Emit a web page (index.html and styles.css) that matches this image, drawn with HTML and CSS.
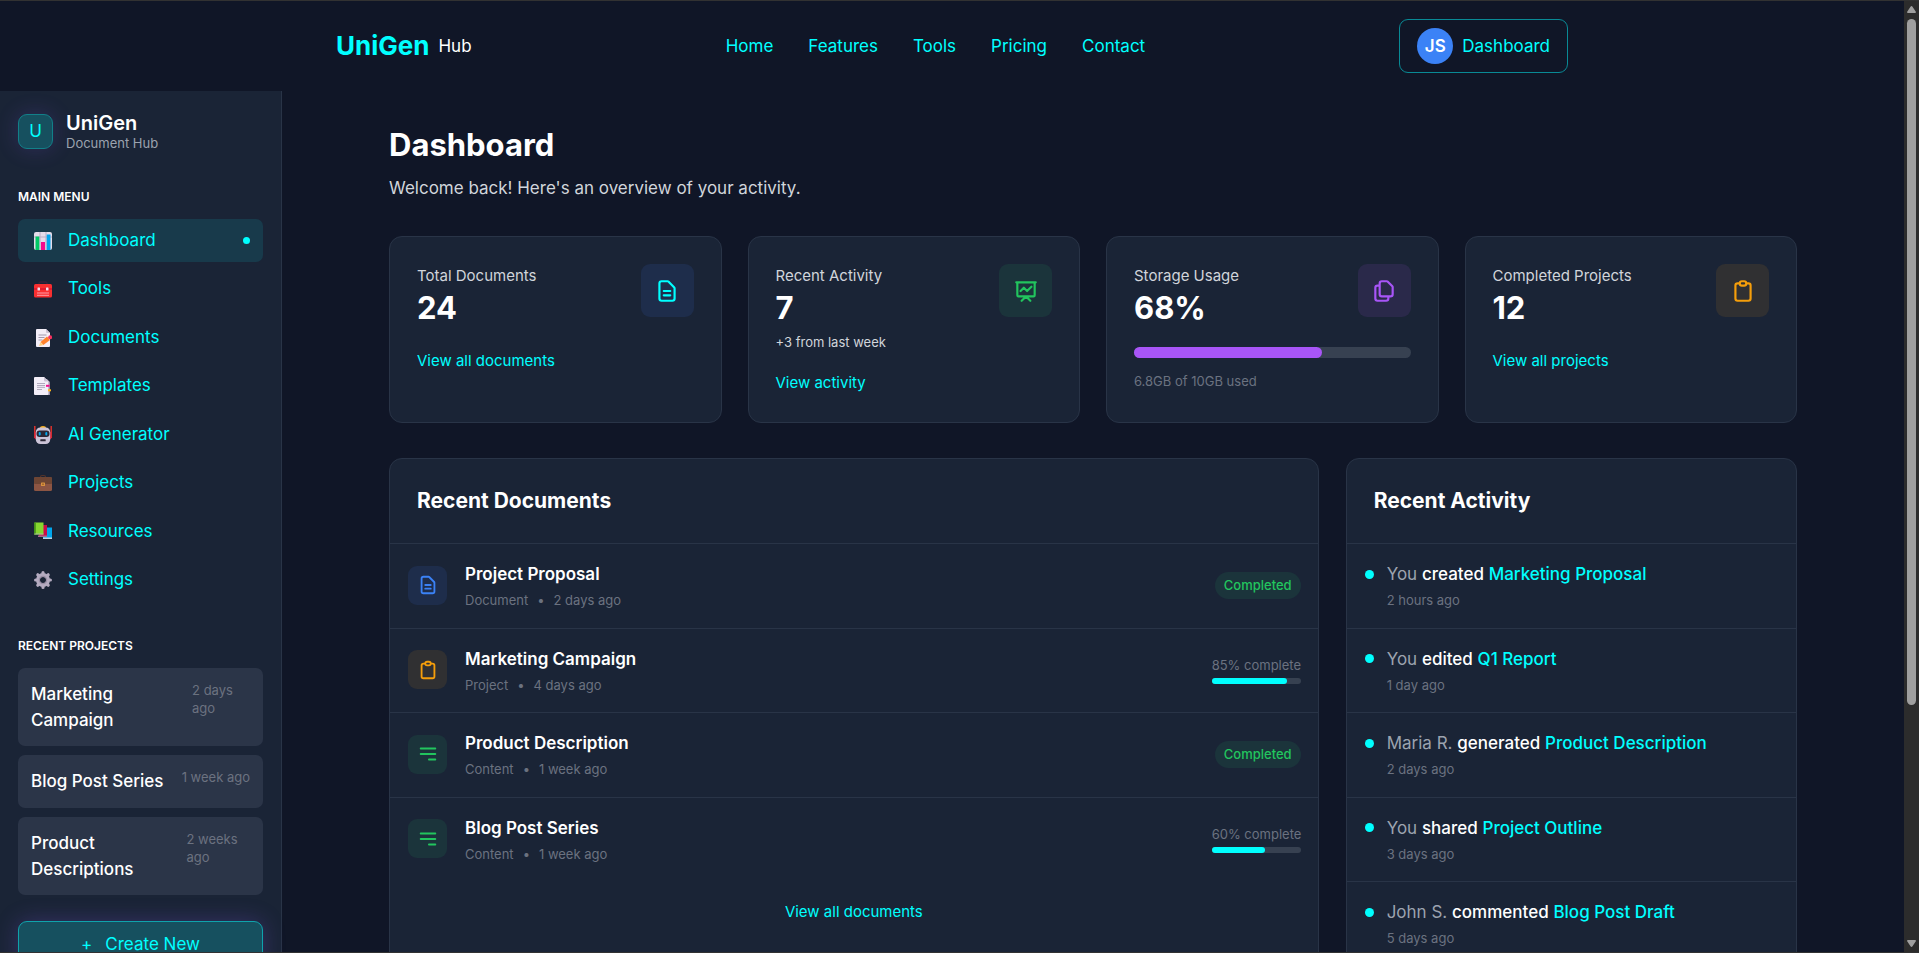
FILE: index.html
```html
<!DOCTYPE html>
<html lang="en">
<head>
<meta charset="utf-8">
<title>UniGen Hub – Dashboard</title>
<meta name="viewport" content="width=device-width, initial-scale=1">
<link rel="stylesheet" href="styles.css">
</head>
<body>
<svg class="sprite" aria-hidden="true">
  <symbol id="i-doc" viewBox="0 0 24 24"><path d="M9 12h6m-6 4h6m2 5H7a2 2 0 01-2-2V5a2 2 0 012-2h5.586a1 1 0 01.707.293l5.414 5.414a1 1 0 01.293.707V19a2 2 0 01-2 2z"/></symbol>
  <symbol id="i-chart" viewBox="0 0 24 24"><path d="M7 12l3-3 3 3 4-4M8 21l4-4 4 4M3 4h18M4 4h16v12a1 1 0 01-1 1H5a1 1 0 01-1-1V4z"/></symbol>
  <symbol id="i-copy" viewBox="0 0 24 24"><path d="M8 7v8a2 2 0 002 2h6M8 7V5a2 2 0 012-2h4.586a1 1 0 01.707.293l4.414 4.414a1 1 0 01.293.707V15a2 2 0 01-2 2h-2M8 7H6a2 2 0 00-2 2v10a2 2 0 002 2h8a2 2 0 002-2v-2"/></symbol>
  <symbol id="i-clip" viewBox="0 0 24 24"><path d="M9 5H7a2 2 0 00-2 2v12a2 2 0 002 2h10a2 2 0 002-2V7a2 2 0 00-2-2h-2M9 5a2 2 0 002 2h2a2 2 0 002-2M9 5a2 2 0 012-2h2a2 2 0 012 2"/></symbol>
  <symbol id="i-lines" viewBox="0 0 24 24"><path d="M4 6h16M4 12h16m-7 6h7"/></symbol>
</svg>
<div class="window">
  <div class="view">
    <header class="topbar">
      <div class="topbar-inner">
        <a class="logo" href="#"><span class="logo-name">UniGen</span><span class="logo-sub">Hub</span></a>
        <nav class="topnav" aria-label="Site">
          <a href="#">Home</a><a href="#">Features</a><a href="#">Tools</a><a href="#">Pricing</a><a href="#">Contact</a>
        </nav>
        <a class="account" href="#"><span class="avatar">JS</span><span>Dashboard</span></a>
      </div>
    </header>
    <div class="body">
      <aside class="sidebar">
        <div class="brand">
          <span class="brand-mark">U</span>
          <div><p class="brand-name">UniGen</p><p class="brand-sub">Document Hub</p></div>
        </div>
        <h2 class="side-title">MAIN MENU</h2>
        <nav class="menu" aria-label="Main menu">
          <a class="menu-item active" href="#">
            <svg class="emoji" viewBox="0 0 18 18"><rect width="18" height="18" rx="2" fill="#e4dcea"/><path d="M6 0v18M12 0v18M0 5h18" stroke="#b9aec6" stroke-width="1"/><rect x="1.5" y="4.500" width="3.800" height="13.500" fill="#00c965"/><rect x="7" y="10" width="4" height="8" fill="#f70a8d"/><rect x="12.700" y="2.500" width="3.800" height="15.500" fill="#00a6ed"/></svg>
            <span>Dashboard</span></a>
          <a class="menu-item" href="#">
            <svg class="emoji" viewBox="0 0 18 18"><path d="M5 4V3q0-1 1-1h6q1 0 1 1v1" fill="none" stroke="#46203c"/><rect y="4" width="18" height="13.500" rx="1.500" fill="#f92f30"/><path d="M0 9h18" stroke="#ca0b2e"/><rect x="3.500" y="7.500" width="2.500" height="3" rx=".6" fill="#f6ddea"/><rect x="12" y="7.500" width="2.500" height="3" rx=".6" fill="#f6ddea"/><path d="M3 13h12M3 15.300h12" stroke="#ff9fa8"/></svg>
            <span>Tools</span></a>
          <a class="menu-item" href="#">
            <svg class="emoji" viewBox="0 0 18 18"><path d="M3 0h9l4 4v13q0 1-1 1H3q-1 0-1-1V1q0-1 1-1z" fill="#f3eef8"/><path d="M12 0v3q0 1 1 1h3z" fill="#cdc4d6"/><path d="M4.500 6h8M4.500 8.500h6M4.500 11h4" stroke="#998ea4" stroke-width=".9"/><path d="M6.500 13l6.500-5.500 3 3.500-6.600 5z" fill="#ff822d"/><path d="M6.500 13L5 16.900l4.400-.9z" fill="#ffce7c"/><circle cx="16.200" cy="8.300" r="2" fill="#f8315f"/></svg>
            <span>Documents</span></a>
          <a class="menu-item" href="#">
            <svg class="emoji" viewBox="0 0 18 18"><path d="M4 2h9l3 3v13H4z" fill="#9b8fa8"/><path d="M1 0h9l4.500 4.500V17q0 1-1 1H1q-1 0-1-1V1q0-1 1-1z" fill="#f3eef8"/><path d="M10 0v3.500q0 1 1 1h3.500z" fill="#cdc4d6"/><path d="M3 6.500h8M3 8.500h8M3 10.300h8M3 12.500h5" stroke="#a9a0b5" stroke-width=".9"/><path d="M12 8.800h3.500" stroke="#f70a8d" stroke-width="2"/><path d="M14 13.300h3" stroke="#fcb31c" stroke-width="2"/></svg>
            <span>Templates</span></a>
          <a class="menu-item" href="#">
            <svg class="emoji" viewBox="0 0 18 18"><path d="M.8 0v12M17.200 0v12" stroke="#e8332c" stroke-width="1.400"/><rect x=".8" y="6" width="2" height="7" fill="#d21b3a"/><rect x="15.200" y="6" width="2" height="7" fill="#d21b3a"/><path d="M6 2q0-2 3-2t3 2z" fill="#fcb31c"/><rect x="1.800" y="1.500" width="14.400" height="16.500" rx="4.500" fill="#ccc4d8"/><rect x="2.500" y="4.500" width="13" height="6.500" rx="3" fill="#2c2836"/><rect x="4.700" y="6" width="2" height="3.500" rx="1" fill="#00a6ed"/><rect x="11.300" y="6" width="2" height="3.500" rx="1" fill="#00a6ed"/><rect x="6.300" y="13.200" width="5.400" height="2" rx=".5" fill="#2c2836"/></svg>
            <span>AI Generator</span></a>
          <a class="menu-item" href="#">
            <svg class="emoji" viewBox="0 0 18 18"><path d="M6.500 4V3q0-1.500 1.500-1.500h2q1.500 0 1.500 1.500v1" fill="none" stroke="#52332a" stroke-width="1.200"/><rect y="3" width="18" height="14" rx="1.500" fill="#8c5543"/><path d="M1.500 3h15Q18 3 18 4.500V9q0 1-1 1H1q-1 0-1-1V4.500Q0 3 1.500 3z" fill="#6d4534"/><rect x="7" y="8.500" width="4" height="3.500" rx=".6" fill="#d8913f"/><rect x="8" y="9.500" width="2" height="1.500" fill="#a56a2d"/></svg>
            <span>Projects</span></a>
          <a class="menu-item" href="#">
            <svg class="emoji" viewBox="0 0 18 18"><path d="M9 5.500h9V17H9z" fill="#00a6ed"/><path d="M9 15.500h9V17H9z" fill="#b9d3e4"/><path d="M5 3h8v12H5z" fill="#ca0b4a"/><path d="M4 13.500h9V15H4z" fill="#a3708f"/><path d="M1 .5h8.500V12.500H0v-11q0-1 1-1z" fill="#86d72f"/><path d="M0 1.500q0-1 1-1h.8v12H0z" fill="#44911b"/><path d="M.5 11.500h9v1h-9z" fill="#a9bf9c"/></svg>
            <span>Resources</span></a>
          <a class="menu-item" href="#">
            <svg class="emoji" viewBox="0 0 18 18"><g fill="none" stroke="#998ea4"><circle cx="9" cy="9" r="5" stroke="#b4abc0" stroke-width="4"/><circle cx="9" cy="9" r="3.700" stroke-width="1.200"/></g><g stroke="#b4abc0" stroke-width="3.200" stroke-linecap="round"><path d="M9 1.600v1.200M9 15.200v1.200M1.600 9h1.200M15.200 9h1.200M3.800 3.800l.8.800M13.400 13.400l.8.800M3.800 14.200l.8-.8M13.400 4.600l.8-.8"/></g></svg>
            <span>Settings</span></a>
        </nav>
        <h2 class="side-title recent">RECENT PROJECTS</h2>
        <div class="projects">
          <a class="project" href="#"><span class="project-name">Marketing Campaign</span><span class="project-time">2 days ago</span></a>
          <a class="project" href="#"><span class="project-name">Blog Post Series</span><span class="project-time">1 week ago</span></a>
          <a class="project" href="#"><span class="project-name">Product Descriptions</span><span class="project-time">2 weeks ago</span></a>
        </div>
        <button class="create" type="button"><span>+</span><span>Create New</span></button>
      </aside>
      <main class="main">
        <div class="content">
          <h1>Dashboard</h1>
          <p class="lead">Welcome back! Here's an overview of your activity.</p>
          <section class="stats">
            <article class="card stat">
              <div class="stat-top">
                <div><h3>Total Documents</h3><p class="value">24</p></div>
                <span class="tile tile-lg blue cyan-ink"><svg><use href="#i-doc"/></svg></span>
              </div>
              <a class="stat-link" href="#">View all documents</a>
            </article>
            <article class="card stat">
              <div class="stat-top">
                <div><h3>Recent Activity</h3><p class="value">7</p><p class="delta">+3 from last week</p></div>
                <span class="tile tile-lg green"><svg><use href="#i-chart"/></svg></span>
              </div>
              <a class="stat-link" href="#">View activity</a>
            </article>
            <article class="card stat">
              <div class="stat-top">
                <div><h3>Storage Usage</h3><p class="value">68%</p></div>
                <span class="tile tile-lg purple"><svg><use href="#i-copy"/></svg></span>
              </div>
              <div class="bar bar-lg"><div class="fill" style="width:68%"></div></div>
              <p class="note">6.8GB of 10GB used</p>
            </article>
            <article class="card stat">
              <div class="stat-top">
                <div><h3>Completed Projects</h3><p class="value">12</p></div>
                <span class="tile tile-lg amber"><svg><use href="#i-clip"/></svg></span>
              </div>
              <a class="stat-link" href="#">View all projects</a>
            </article>
          </section>
          <div class="panels">
            <section class="card documents">
              <h2 class="panel-title">Recent Documents</h2>
              <ul class="list">
                <li class="row">
                  <span class="tile blue"><svg><use href="#i-doc"/></svg></span>
                  <div class="row-text"><h3>Project Proposal</h3><p class="meta"><span>Document</span><span>•</span><span>2 days ago</span></p></div>
                  <span class="pill">Completed</span>
                </li>
                <li class="row">
                  <span class="tile amber"><svg><use href="#i-clip"/></svg></span>
                  <div class="row-text"><h3>Marketing Campaign</h3><p class="meta"><span>Project</span><span>•</span><span>4 days ago</span></p></div>
                  <div class="progress"><span>85% complete</span><div class="bar"><div class="fill" style="width:85%"></div></div></div>
                </li>
                <li class="row">
                  <span class="tile green"><svg><use href="#i-lines"/></svg></span>
                  <div class="row-text"><h3>Product Description</h3><p class="meta"><span>Content</span><span>•</span><span>1 week ago</span></p></div>
                  <span class="pill">Completed</span>
                </li>
                <li class="row">
                  <span class="tile green"><svg><use href="#i-lines"/></svg></span>
                  <div class="row-text"><h3>Blog Post Series</h3><p class="meta"><span>Content</span><span>•</span><span>1 week ago</span></p></div>
                  <div class="progress"><span>60% complete</span><div class="bar"><div class="fill" style="width:60%"></div></div></div>
                </li>
              </ul>
              <p class="panel-foot"><a href="#">View all documents</a></p>
            </section>
            <section class="card activity">
              <h2 class="panel-title">Recent Activity</h2>
              <ul class="list">
                <li class="event"><p class="event-text"><span>You</span> <b>created</b> <a href="#">Marketing Proposal</a></p><p class="meta">2 hours ago</p></li>
                <li class="event"><p class="event-text"><span>You</span> <b>edited</b> <a href="#">Q1 Report</a></p><p class="meta">1 day ago</p></li>
                <li class="event"><p class="event-text"><span>Maria R.</span> <b>generated</b> <a href="#">Product Description</a></p><p class="meta">2 days ago</p></li>
                <li class="event"><p class="event-text"><span>You</span> <b>shared</b> <a href="#">Project Outline</a></p><p class="meta">3 days ago</p></li>
                <li class="event"><p class="event-text"><span>John S.</span> <b>commented</b> <a href="#">Blog Post Draft</a></p><p class="meta">5 days ago</p></li>
              </ul>
            </section>
          </div>
        </div>
      </main>
    </div>
  </div>
  <div class="scrollbar" aria-hidden="true">
    <svg viewBox="0 0 9 7"><path d="M4.500 0Q5 0 5.500.8L9 6q0 1-1 1H1Q0 7 0 6L3.500.8Q4 0 4.500 0z"/></svg>
    <div class="track"><div class="thumb"></div></div>
    <svg viewBox="0 0 9 7"><path d="M4.500 7Q4 7 3.500 6.200L0 1q0-1 1-1h7q1 0 1 1L5.500 6.200Q5 7 4.500 7z"/></svg>
  </div>
</div>
</body>
</html>
```
FILE: styles.css
```css
:root {
  --bg: #101627;
  --panel: #1a2436;
  --line: #293447;
  --cyan: #00ffff;
  --muted: #6b7280;
  --gray: #9ca3af;
  --soft: #d1d5db;
}

* { box-sizing: border-box; margin: 0; }

body {
  background: var(--bg);
  color: #fff;
  font-family: Inter, "Liberation Sans", sans-serif;
  font-size: 17px;
  line-height: 26px;
}

a { color: var(--cyan); text-decoration: none; }
ul { list-style: none; padding: 0; }
.sprite { display: none; }

.window {
  display: grid;
  grid-template-columns: 1fr 15px;
  height: 100vh;
  border-top: 1px solid #323232;
  border-bottom: 1px solid #323232;
}

.view { overflow: hidden; }

/* Top bar */
.topbar { padding: 18px; }
.topbar-inner {
  display: flex;
  align-items: center;
  justify-content: space-between;
  max-width: 1232px;
  margin: 0 auto;
}
.logo { display: flex; align-items: center; gap: 9px; }
.logo-name { font-size: 26px; font-weight: 700; }
.logo-sub { color: #fff; }
.topnav { display: flex; gap: 35px; }
.account {
  display: flex;
  align-items: center;
  gap: 9px;
  padding: 8px 17px;
  border: 1px solid #098a95;
  border-radius: 9px;
}
.avatar {
  width: 36px;
  height: 36px;
  border-radius: 50%;
  background: #3b82f6;
  color: #fff;
  font-weight: 600;
  line-height: 36px;
  text-align: center;
}

.body { display: flex; align-items: stretch; }

/* Sidebar */
.sidebar {
  flex: 0 0 282px;
  min-height: 100vh;
  padding: 20px 18px;
  background: var(--panel);
  border-right: 1px solid var(--line);
}
.brand { display: flex; align-items: center; gap: 13px; margin-bottom: 37px; }
.brand-mark {
  width: 35px;
  height: 35px;
  border: 1px solid #128089;
  border-radius: 9px;
  background: #16505f;
  box-shadow: 0 0 22px rgba(139, 92, 246, 0.2);
  color: var(--cyan);
  line-height: 32px;
  text-align: center;
}
.brand-name { font-size: 20px; font-weight: 600; line-height: 24px; }
.brand-sub { color: var(--gray); font-size: 13px; line-height: 16px; }
.side-title { margin-bottom: 13px; font-size: 12px; font-weight: 600; line-height: 18px; }
.side-title.recent { margin-top: 35px; }
.menu { display: grid; gap: 5px; }
.menu-item {
  display: flex;
  align-items: center;
  gap: 16px;
  padding: 10px 13px 10px 16px;
  border-radius: 7px;
  line-height: 1.38;
}
.menu-item.active { background: #183a4b; }
.menu-item.active::after {
  content: "";
  width: 7px;
  height: 7px;
  margin-left: auto;
  border-radius: 50%;
  background: var(--cyan);
}
.emoji { width: 18px; height: 18px; }
.projects { display: grid; gap: 9px; margin-bottom: 26px; }
.project {
  display: flex;
  align-items: flex-start;
  justify-content: space-between;
  gap: 16px;
  padding: 13px;
  border-radius: 7px;
  background: #2b3548;
}
.project-name { color: #fff; font-weight: 500; line-height: 1.55; }
.project-time { color: var(--muted); font-size: 13px; line-height: 18px; }
.create {
  display: flex;
  align-items: center;
  justify-content: center;
  gap: 13px;
  width: 100%;
  padding: 9px;
  border: 1px solid #0fa3ac;
  border-radius: 9px;
  background: #16505f;
  box-shadow: 0 0 22px rgba(139, 92, 246, 0.25);
  color: var(--cyan);
  font: inherit;
}

/* Main column */
.main { flex: 1; min-width: 0; padding: 34px 35px; }
.content { max-width: 1408px; margin: 0 auto; }
h1 { font-size: 31px; font-weight: 700; line-height: 40px; }
.lead { margin: 10px 0 35px; color: var(--soft); }
.card { border: 1px solid var(--line); border-radius: 13px; background: var(--panel); }

.stats { display: grid; grid-template-columns: repeat(4, 1fr); gap: 26px; margin-bottom: 35px; }
.stat { padding: 27px; }
.stat-top { display: flex; align-items: flex-start; justify-content: space-between; }
.stat h3 { color: var(--soft); font-size: 15px; font-weight: 400; line-height: 23px; }
.value { font-size: 31px; font-weight: 700; line-height: 42px; }
.delta { margin-top: 4px; color: var(--soft); font-size: 13px; line-height: 18px; }
.stat-link, .panel-foot { font-size: 15px; line-height: 24px; }
.stat-link { display: block; margin-top: 20px; }
.note { margin-top: 14px; color: var(--muted); font-size: 13px; line-height: 18px; }

.tile {
  display: grid;
  place-items: center;
  width: 39px;
  height: 39px;
  border-radius: 9px;
}
.tile svg {
  width: 22px;
  height: 22px;
  fill: none;
  stroke: currentColor;
  stroke-width: 2;
  stroke-linecap: round;
  stroke-linejoin: round;
}
.tile-lg { width: 53px; height: 53px; }
.tile-lg svg { width: 26px; height: 26px; }
.blue { background: #1e2d4b; color: #3b82f6; }
.green { background: #1b343b; color: #22c55e; }
.purple { background: #2a294a; color: #a855f7; }
.amber { background: #303032; color: #f59e0b; }
.cyan-ink { color: var(--cyan); }

.bar { height: 6px; border-radius: 6px; background: #374151; }
.bar .fill { height: 100%; border-radius: 6px; background: var(--cyan); }
.bar-lg { height: 11px; margin-top: 18px; }
.bar-lg .fill { background: #a855f7; }

.panels { display: grid; grid-template-columns: repeat(3, 1fr); gap: 27px; }
.documents { grid-column: span 2; }
.panel-title {
  padding: 26px 27px;
  border-bottom: 1px solid var(--line);
  font-size: 21px;
  font-weight: 700;
  line-height: 32px;
}
.row, .event { padding: 17px 17px 18px 18px; border-bottom: 1px solid var(--line); }
.list > :last-child { border-bottom: 0; }
.row { display: flex; align-items: center; gap: 18px; }
.row-text { flex: 1; }
.row h3 { font-size: 17px; font-weight: 600; line-height: 1.55; }
.event-text { color: var(--gray); font-weight: 400; line-height: 1.55; }
.event-text b, .event-text a { font-weight: 500; }
.event-text b { color: #fff; }
.meta {
  display: flex;
  gap: 9px;
  margin-top: 4px;
  color: var(--muted);
  font-size: 13px;
  line-height: 1.4;
}
.pill {
  padding: 4px 9px;
  border-radius: 14px;
  background: #1b343b;
  color: #22c55e;
  font-size: 13px;
  font-weight: 500;
  line-height: 19px;
}
.progress { width: 89px; color: var(--muted); font-size: 13px; line-height: 18px; white-space: nowrap; }
.progress .bar { margin-top: 4px; }
.panel-foot { padding: 19px; text-align: center; }

.event { display: grid; grid-template-columns: 9px 1fr; column-gap: 13px; }
.event::before {
  content: "";
  width: 9px;
  height: 9px;
  align-self: center;
  border-radius: 50%;
  background: var(--cyan);
}
.event .meta { grid-column: 2; }

/* Scroll track */
.scrollbar {
  display: flex;
  flex-direction: column;
  align-items: center;
  gap: 6px;
  padding: 5px 0;
  background: #2c2c2c;
}
.scrollbar svg { width: 9px; height: 7px; fill: #9f9f9f; }
.track { flex: 1; width: 9px; }
.thumb { height: 75%; border-radius: 5px; background: #9f9f9f; }
```
